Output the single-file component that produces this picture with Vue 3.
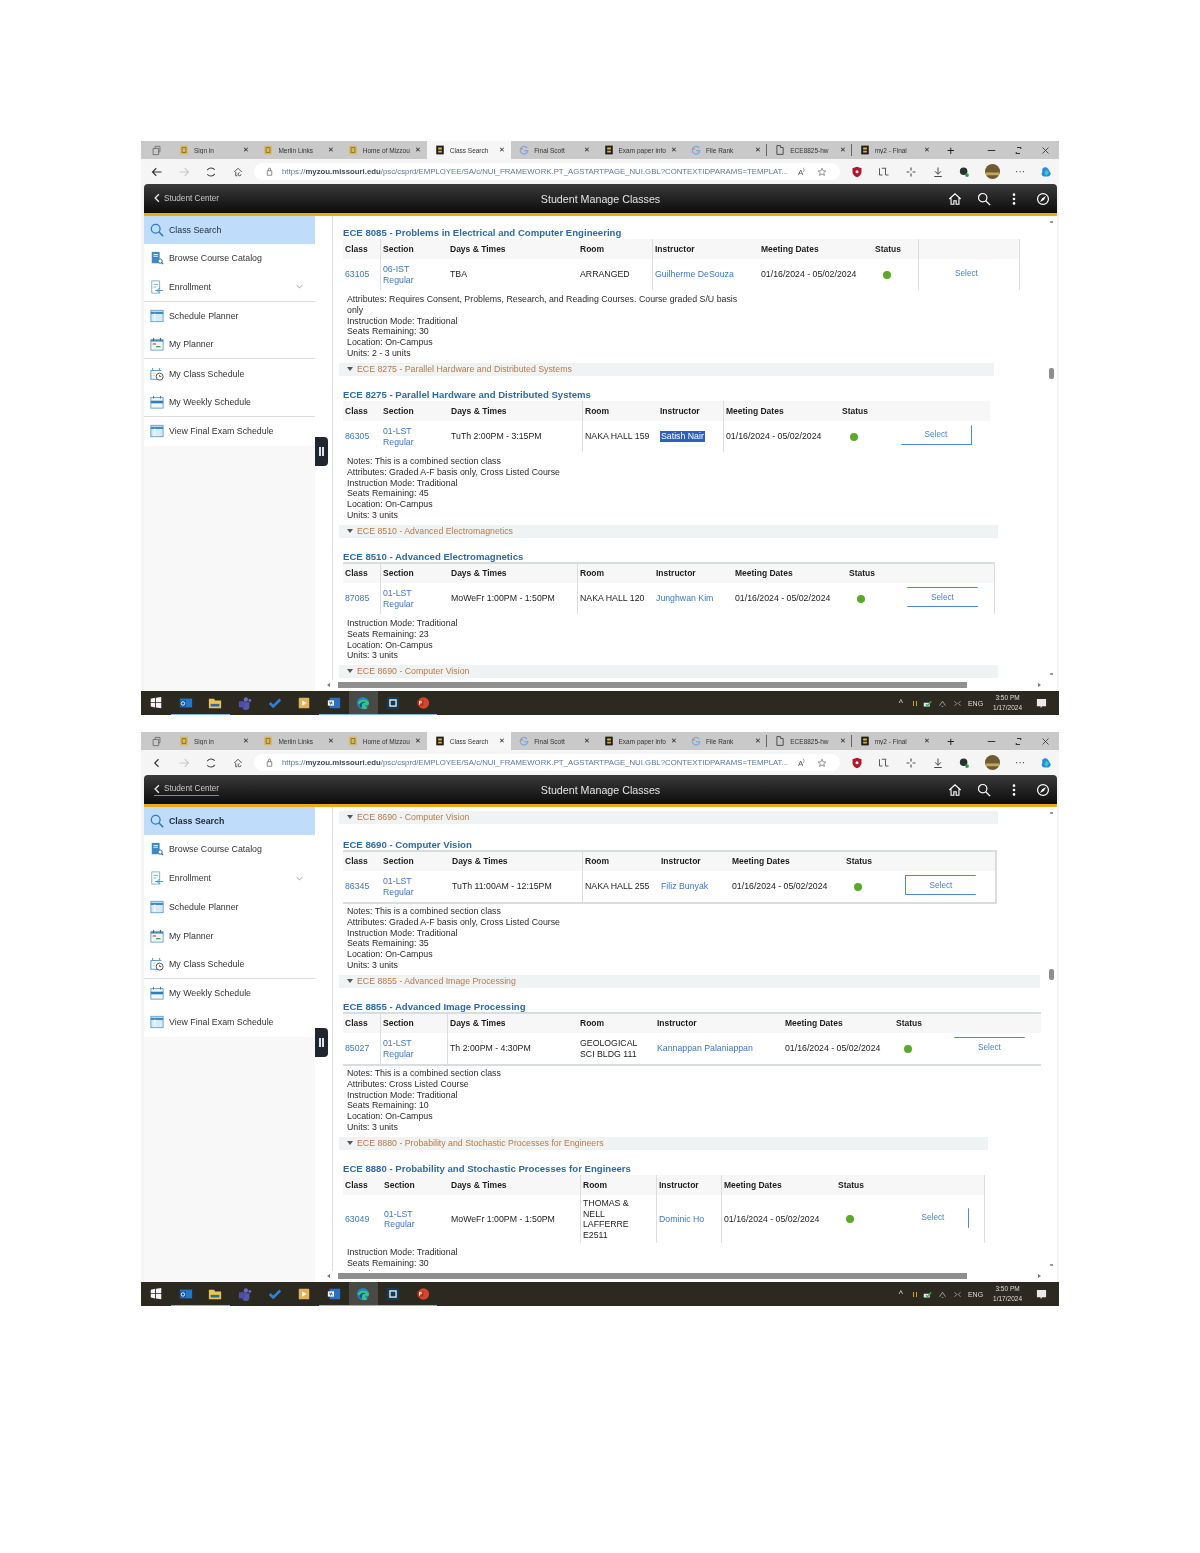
<template>
  <div class="page">
    <div v-for="s in screens" :key="s.id" class="screen">
      <!-- browser tabs -->
      <div class="tabs">
        <svg class="lead" viewBox="0 0 16 16" v-html="icons.spaces"></svg>
        <div v-for="t in tabs" :key="t.label" class="tab" :class="{ active: t.active, divided: t.divided }">
          <svg class="fav" viewBox="0 0 16 16" v-html="icons[t.icon]"></svg>
          <span class="tab-label">{{ t.label }}</span>
          <span class="tab-x">✕</span>
        </div>
        <span class="plus">+</span>
        <div class="win-btns">
          <svg viewBox="0 0 12 12"><path d="M1 6h10" stroke="#333" stroke-width="1.4" /></svg>
          <svg viewBox="0 0 12 12"><path d="M4 2h5v2M8 10H3V8" stroke="#333" stroke-width="1.4" fill="none" /></svg>
          <svg viewBox="0 0 12 12"><path d="M2 2l8 8M10 2l-8 8" stroke="#333" stroke-width="1.1" /></svg>
        </div>
      </div>

      <!-- address bar -->
      <div class="addr">
        <svg class="tool back" viewBox="0 0 16 16"><path :d="s.backIcon" stroke="#333" stroke-width="1.5" fill="none" /></svg>
        <svg class="tool fwd" viewBox="0 0 16 16"><path d="M2 8h12M9 3l5 5-5 5" stroke="#c9c9c9" stroke-width="1.5" fill="none" /></svg>
        <svg class="tool" viewBox="0 0 16 16"><path d="M3 5.5A6 6 0 0 1 13 5M13 10.5A6 6 0 0 1 3 11" stroke="#444" stroke-width="1.4" fill="none" /></svg>
        <svg class="tool" viewBox="0 0 16 16"><path d="M3 8l5-5 5 5M5 8v5h2M12 11a2 2 0 1 1-2-2" stroke="#444" stroke-width="1.2" fill="none" /></svg>
        <div class="pill">
          <svg class="lock" viewBox="0 0 12 12"><path d="M3 5h6v6H3zM4.500 5V3a1.500 1.500 0 0 1 3 0v2" stroke="#666" fill="none" /></svg>
          <span class="url">https://<b>myzou.missouri.edu</b>{{ urlPath }}</span>
          <span class="aloud">A⁾</span>
          <svg class="star" viewBox="0 0 16 16"><path d="M8 2l1.800 4 4.200.4-3.200 2.800 1 4.300L8 11.200l-3.800 2.300 1-4.300L2 6.400 6.200 6z" stroke="#555" fill="none" /></svg>
        </div>
        <div class="ext">
          <svg viewBox="0 0 16 16"><path d="M8 1l6 2v5c0 3-3 6-6 7-3-1-6-4-6-7V3z" fill="#b3162b" /><circle cx="8" cy="7.500" r="2" fill="#fff" /></svg>
          <svg viewBox="0 0 16 16"><path d="M2 3v9h4M10 3v9h4M5 3h6" stroke="#555" stroke-width="1.300" fill="none" /></svg>
          <svg viewBox="0 0 16 16"><path d="M8 2v4M8 10v4M2 8h4M10 8h4" stroke="#555" stroke-width="1.600" /></svg>
          <svg viewBox="0 0 16 16"><path d="M8 2v9M4 7l4 4 4-4M3 14h10" stroke="#444" stroke-width="1.300" fill="none" /></svg>
          <svg viewBox="0 0 16 16"><circle cx="7.500" cy="7" r="5" fill="#26332c" /><circle cx="12" cy="12" r="2.500" fill="#2c9a47" /></svg>
          <svg class="avatar" viewBox="0 0 16 16"><circle cx="8" cy="8" r="8" fill="#6f5a32" /><path d="M1 9h14v3H1z" fill="#c3a85c" /></svg>
          <span class="dots">···</span>
          <svg viewBox="0 0 16 16"><path d="M3 4c2-3 6-3 8 0l3 5c1 3-2 5-4 5H6c-3 0-5-3-3-6z" fill="#2a8be0" /><path d="M8 5l4 3-3 5-3-3z" fill="#34d0c0" /></svg>
        </div>
      </div>

      <!-- peoplesoft banner -->
      <header class="banner">
        <span class="crumb" :class="{ focused: s.focusCrumb }">
          <svg viewBox="0 0 8 12"><path d="M6.500 1l-5 5 5 5" stroke="#eee" stroke-width="1.700" fill="none" /></svg>
          <span>Student Center</span>
        </span>
        <span class="banner-title">Student Manage Classes</span>
        <div class="banner-icons">
          <svg viewBox="0 0 16 16"><path d="M1.500 8L8 2l6.500 6M3.500 7v7h3.200v-4h2.600v4h3.200V7" stroke="#fff" stroke-width="1.300" fill="none" /></svg>
          <svg viewBox="0 0 16 16"><circle cx="6.500" cy="6.500" r="4.800" stroke="#fff" stroke-width="1.400" fill="none" /><path d="M10 10l5 5" stroke="#fff" stroke-width="1.600" /></svg>
          <svg viewBox="0 0 16 16"><circle cx="8" cy="3" r="1.500" fill="#fff" /><circle cx="8" cy="8" r="1.500" fill="#fff" /><circle cx="8" cy="13" r="1.500" fill="#fff" /></svg>
          <svg viewBox="0 0 16 16"><circle cx="8" cy="8" r="6.200" stroke="#fff" stroke-width="1.400" fill="none" /><path d="M11.500 4.500L9 9 4.500 11.500 7 7z" fill="#fff" /></svg>
        </div>
      </header>

      <div class="main">
        <nav class="side">
          <div
            v-for="(item, i) in sideItems"
            :key="item.label"
            class="side-item"
            :class="{ current: i === 0, heavy: i === 0 && s.boldFirst, ruled: s.rules.includes(i) }"
          >
            <svg class="side-icon" viewBox="0 0 16 16" v-html="icons[item.icon]"></svg>
            <span>{{ item.label }}</span>
            <svg v-if="item.more" class="chev" viewBox="0 0 10 6"><path d="M1 1l4 4 4-4" stroke="#777" fill="none" /></svg>
          </div>
          <div class="side-fill"></div>
        </nav>
        <div class="gutter"></div>

        <div class="content">
          <div v-if="s.leadBar" class="bar lead" :style="{ width: s.leadBar.width + 'px' }">
            <i class="tri"></i>{{ s.leadBar.label }}
          </div>
          <section v-for="c in s.courses" :key="c.title">
            <h3 class="title">{{ c.title }}</h3>
            <div class="tbl" :class="c.edges" :style="{ width: sum(c.cols) + 'px' }">
              <div class="tr thead" :style="gridOf(c)">
                <span v-for="(h, i) in headings" :key="h" class="td" :class="{ sep: c.seps.includes(i) }">{{ h }}</span>
                <span class="td" :class="{ sep: c.seps.includes(7) }"></span>
              </div>
              <div class="tr tbody" :style="gridOf(c)">
                <span class="td" :class="{ sep: c.seps.includes(0) }"><a>{{ c.nbr }}</a></span>
                <span class="td" :class="{ sep: c.seps.includes(1) }"><a>{{ c.sec || "01-LST" }}</a><a>Regular</a></span>
                <span class="td" :class="{ sep: c.seps.includes(2) }">{{ c.days }}</span>
                <span class="td" :class="{ sep: c.seps.includes(3) }">
                  <span v-for="r in c.room" :key="r">{{ r }}</span>
                </span>
                <span class="td" :class="{ sep: c.seps.includes(4) }"><a :class="{ picked: c.picked }">{{ c.teacher }}</a></span>
                <span class="td" :class="{ sep: c.seps.includes(5) }">01/16/2024 - 05/02/2024</span>
                <span class="td" :class="{ sep: c.seps.includes(6) }"><i class="dot"></i></span>
                <span class="td" :class="{ sep: c.seps.includes(7) }">
                  <button class="select" :class="c.btn" :style="{ marginLeft: c.btnLeft + 'px' }">Select</button>
                </span>
              </div>
            </div>
            <div class="notes">
              <div v-for="n in c.notes" :key="n">{{ n }}</div>
            </div>
            <div v-if="c.bar" class="bar" :style="{ width: c.bar.width + 'px' }">
              <i class="tri"></i>{{ c.bar.label }}
            </div>
          </section>
        </div>

        <button class="handle"><i></i><i></i></button>
        <div class="vbar">
          <span class="arrow-up"></span>
          <span class="vthumb" :style="{ top: s.thumbTop + 'px' }"></span>
          <span class="arrow-down"></span>
        </div>
        <div class="hbar">
          <i class="h-left"></i>
          <span class="hthumb"></span>
          <i class="h-right"></i>
        </div>
      </div>

      <!-- windows taskbar -->
      <footer class="taskbar">
        <div v-for="a in apps" :key="a.icon" class="app" :class="{ running: a.running, on: a.on }">
          <svg viewBox="0 0 16 16" v-html="icons[a.icon]"></svg>
        </div>
        <div class="tray">
          <span class="caret">^</span>
          <i class="pause"></i>
          <svg viewBox="0 0 12 12"><path d="M1 5h8v5H1z" fill="#e8e8e8" /><path d="M4 7l2 2 5-6" stroke="#2fae4c" stroke-width="1.600" fill="none" /></svg>
          <svg viewBox="0 0 12 12"><path d="M2 9l4-6 4 6M5 10h2" stroke="#bbb" fill="none" /></svg>
          <svg viewBox="0 0 12 12"><path d="M2 9l3-3-3-3M10 3L7 6l3 3" stroke="#bbb" fill="none" /></svg>
          <span class="lang">ENG</span>
          <div class="clock"><span>{{ s.time }}</span><span>1/17/2024</span></div>
          <svg class="notif" viewBox="0 0 12 12"><path d="M1 1h10v8H7L5 11V9H1z" fill="#e9e9e9" /></svg>
        </div>
      </footer>
    </div>
  </div>
</template>

<script setup>
const urlPath = "/psc/csprd/EMPLOYEE/SA/c/NUI_FRAMEWORK.PT_AGSTARTPAGE_NUI.GBL?CONTEXTIDPARAMS=TEMPLAT...";

const headings = ["Class", "Section", "Days & Times", "Room", "Instructor", "Meeting Dates", "Status"];

const tabs = [
  { label: "Sign in", icon: "tiger" },
  { label: "Merlin Links", icon: "tiger" },
  { label: "Home of Mizzou", icon: "tiger" },
  { label: "Class Search", icon: "tigerDark", active: true },
  { label: "Final Scott", icon: "google" },
  { label: "Exam paper info", icon: "tigerDark" },
  { label: "File Rank", icon: "google", divided: true },
  { label: "ECE8825-hw", icon: "doc", divided: true },
  { label: "my2 - Final", icon: "tigerDark" },
];

const sideItems = [
  { label: "Class Search", icon: "search" },
  { label: "Browse Course Catalog", icon: "book" },
  { label: "Enrollment", icon: "enroll", more: true },
  { label: "Schedule Planner", icon: "window" },
  { label: "My Planner", icon: "planner" },
  { label: "My Class Schedule", icon: "clock" },
  { label: "My Weekly Schedule", icon: "week" },
  { label: "View Final Exam Schedule", icon: "window" },
];

const apps = [
  { icon: "windows" },
  { icon: "outlook", running: true },
  { icon: "folder", running: true },
  { icon: "teams" },
  { icon: "todo" },
  { icon: "player" },
  { icon: "word", running: true },
  { icon: "edge", running: true, on: true },
  { icon: "box", running: true },
  { icon: "ppt", running: true },
];

const icons = {
  spaces: '<path d="M3 5h8v9H3zM6 5V2h7v8h-2" stroke="#555" fill="none"/>',
  tiger: '<rect x="2" y="1" width="12" height="14" fill="#d8b75a"/><path d="M5 4h6v8H5z" fill="none" stroke="#6b5520"/>',
  tigerDark: '<rect x="2" y="1" width="12" height="14" fill="#1c1c1c"/><path d="M5 4h6v3H5zM5 9h6v3H5z" fill="#e2b33a"/>',
  google: '<path d="M13 5A6 6 0 1 0 14 9H8" stroke="#7fa9e0" stroke-width="2" fill="none"/><path d="M3 5l3 2" stroke="#e47a6d" stroke-width="2"/>',
  doc: '<path d="M3 1h6v3h4v11H3z" fill="none" stroke="#333" stroke-width="1.300"/>',
  search: '<circle cx="6.500" cy="6.500" r="5" stroke="#2f7dbd" stroke-width="1.500" fill="none"/><path d="M10 10l5 5" stroke="#2f7dbd" stroke-width="1.700"/>',
  book: '<path d="M2 1h9v13H2z" fill="#3d8ac4"/><path d="M4 4h5M4 6h5" stroke="#fff"/><circle cx="11.500" cy="11.500" r="2.500" fill="#fff" stroke="#265f8c"/><path d="M13 13l2 2" stroke="#265f8c" stroke-width="1.500"/>',
  enroll: '<path d="M2 1h9v14H2z" fill="#fff" stroke="#77a9cf"/><path d="M4 5h5M4 8h3" stroke="#5fb0a0"/><path d="M6 12h9M11 9l-3 3 3 3" stroke="#2f8ccb" fill="none"/>',
  window: '<rect x="1" y="1.500" width="14" height="13" fill="#d9e9f5" stroke="#5b9ccb"/><path d="M1 4.500h14" stroke="#3d8ac4" stroke-width="2.500"/><path d="M5.500 5v9" stroke="#fff"/>',
  planner: '<rect x="1" y="3" width="14" height="12" fill="#f3f8fb" stroke="#5b9ccb"/><path d="M1 4.500h14M4 1v3M12 1v3" stroke="#2f6f9f" stroke-width="1.300"/><path d="M3 8h4" stroke="#d4574a" stroke-width="1.500"/><path d="M7 11h5" stroke="#4ba35a" stroke-width="1.500"/>',
  clock: '<path d="M1 4h12M3 1v3M11 1v3M1 4v10h7" stroke="#5b9ccb" fill="none" stroke-width="1.200"/><path d="M3 7h3M3 10h3" stroke="#9cc3df"/><circle cx="11" cy="11" r="4" fill="#fff" stroke="#444"/><path d="M11 9v2h2" stroke="#444" fill="none"/>',
  week: '<rect x="1" y="3" width="14" height="12" fill="#f3f8fb" stroke="#5b9ccb"/><path d="M4 1v3M12 1v3" stroke="#2f6f9f"/><path d="M1 8h14" stroke="#2f7dbd" stroke-width="3"/>',
  windows: '<path d="M2 3l5-1v5H2zM8 2l6-1v6H8zM2 8h5v5l-5-1zM8 8h6v6l-6-1z" fill="#f4f4f4"/>',
  outlook: '<rect x="1" y="3" width="14" height="10" fill="#1f78c9"/><rect x="1" y="5" width="7" height="7" fill="#0d5aa0"/><circle cx="4.500" cy="8.500" r="2" fill="none" stroke="#fff"/>',
  folder: '<path d="M1 3h6l1 2h7v9H1z" fill="#eec34f"/><path d="M3 9h10v3H3z" fill="#2b6aa6"/>',
  teams: '<circle cx="9" cy="4" r="2.500" fill="#6a6bc4"/><circle cx="13.500" cy="5" r="1.700" fill="#6a6bc4"/><path d="M5 7h8v5a4 4 0 0 1-8 0z" fill="#5558af"/><rect x="1" y="6" width="7" height="7" fill="#4b4fa8"/>',
  todo: '<path d="M2 8l4 4 8-8" stroke="#2f7fd8" stroke-width="3" fill="none"/>',
  player: '<rect x="2" y="2" width="12" height="12" rx="1" fill="#e6b15b"/><path d="M6 5l5 3-5 3z" fill="#fff"/>',
  word: '<rect x="3" y="2" width="12" height="12" fill="#2a6fc4"/><rect x="1" y="5" width="7" height="6" fill="#fff"/><path d="M3 6.500l1 3 1-3 1 3" stroke="#1b4f96" fill="none"/>',
  edge: '<circle cx="8" cy="8" r="7" fill="#2280c8"/><path d="M2 8c1-5 11-6 13 0 0 3-4 3-5 1 1 4 4 5 3 5-5 3-9-1-8-4z" fill="#33c481"/><path d="M4 10c2-4 6-4 7-2-3-1-5 1-4 5-2 0-3-1-3-3z" fill="#15548f"/>',
  box: '<rect x="1" y="1" width="14" height="14" fill="#123c54"/><rect x="4.500" y="4.500" width="7" height="7" fill="none" stroke="#f2f2f2" stroke-width="1.500"/>',
  ppt: '<circle cx="8.500" cy="8" r="6.500" fill="#d4472b"/><rect x="1.500" y="5" width="7" height="6" fill="#b92f15"/><path d="M4 10V6h2v2H4" stroke="#fff" fill="none"/>',
};

const screens = [
  {
    id: 1,
    backIcon: "M14 8H2M7 3L2 8l5 5",
    focusCrumb: false,
    boldFirst: false,
    rules: [2, 4, 6],
    thumbTop: 152,
    time: "3:50 PM",
    courses: [
      {
        title: "ECE 8085 - Problems in Electrical and Computer Engineering",
        cols: [38, 67, 130, 75, 106, 114, 46, 101],
        seps: [0, 3, 6, 7],
        edges: "",
        nbr: "63105",
        sec: "06-IST",
        days: "TBA",
        room: ["ARRANGED"],
        teacher: "Guilherme DeSouza",
        btn: "",
        btnLeft: 10,
        notes: [
          "Attributes: Requires Consent, Problems, Research, and Reading Courses. Course graded S/U basis",
          "only",
          "Instruction Mode: Traditional",
          "Seats Remaining: 30",
          "Location: On-Campus",
          "Units: 2 - 3 units",
        ],
        bar: { label: "ECE 8275 - Parallel Hardware and Distributed Systems", width: 655 },
      },
      {
        title: "ECE 8275 - Parallel Hardware and Distributed Systems",
        cols: [38, 68, 134, 75, 66, 116, 50, 100],
        seps: [2, 4],
        edges: "",
        nbr: "86305",
        days: "TuTh 2:00PM - 3:15PM",
        room: ["NAKA HALL 159"],
        teacher: "Satish Nair",
        picked: true,
        btn: "b r",
        btnLeft: 9,
        notes: [
          "Notes: This is a combined section class",
          "Attributes: Graded A-F basis only, Cross Listed Course",
          "Instruction Mode: Traditional",
          "Seats Remaining: 45",
          "Location: On-Campus",
          "Units: 3 units",
        ],
        bar: { label: "ECE 8510 - Advanced Electromagnetics", width: 659 },
      },
      {
        title: "ECE 8510 - Advanced Electromagnetics",
        cols: [38, 68, 129, 76, 79, 114, 50, 98],
        seps: [0, 2, 7],
        edges: "t",
        nbr: "87085",
        days: "MoWeFr 1:00PM - 1:50PM",
        room: ["NAKA HALL 120"],
        teacher: "Junghwan Kim",
        btn: "t b",
        btnLeft: 8,
        notes: [
          "Instruction Mode: Traditional",
          "Seats Remaining: 23",
          "Location: On-Campus",
          "Units: 3 units",
        ],
        bar: { label: "ECE 8690 - Computer Vision", width: 659 },
      },
    ],
  },
  {
    id: 2,
    backIcon: "M10 3L5 8l5 5",
    focusCrumb: true,
    boldFirst: true,
    rules: [5],
    thumbTop: 162,
    time: "3:50 PM",
    leadBar: { label: "ECE 8690 - Computer Vision", width: 659 },
    courses: [
      {
        title: "ECE 8690 - Computer Vision",
        cols: [38, 69, 133, 76, 71, 114, 51, 100],
        seps: [2],
        edges: "t r b",
        nbr: "86345",
        days: "TuTh 11:00AM - 12:15PM",
        room: ["NAKA HALL 255"],
        teacher: "Filiz Bunyak",
        btn: "l t b",
        btnLeft: 8,
        notes: [
          "Notes: This is a combined section class",
          "Attributes: Graded A-F basis only, Cross Listed Course",
          "Instruction Mode: Traditional",
          "Seats Remaining: 35",
          "Location: On-Campus",
          "Units: 3 units",
        ],
        bar: { label: "ECE 8855 - Advanced Image Processing", width: 701 },
      },
      {
        title: "ECE 8855 - Advanced Image Processing",
        cols: [38, 67, 130, 77, 128, 111, 50, 97],
        seps: [0, 1],
        edges: "t b",
        nbr: "85027",
        days: "Th 2:00PM - 4:30PM",
        room: ["GEOLOGICAL", "SCI BLDG 111"],
        teacher: "Kannappan Palaniappan",
        btn: "t",
        btnLeft: 8,
        notes: [
          "Notes: This is a combined section class",
          "Attributes: Cross Listed Course",
          "Instruction Mode: Traditional",
          "Seats Remaining: 10",
          "Location: On-Campus",
          "Units: 3 units",
        ],
        bar: { label: "ECE 8880 - Probability and Stochastic Processes for Engineers", width: 649 },
      },
      {
        title: "ECE 8880 - Probability and Stochastic Processes for Engineers",
        cols: [39, 67, 132, 76, 65, 114, 51, 98],
        seps: [2, 3, 4, 7],
        edges: "",
        nbr: "63049",
        days: "MoWeFr 1:00PM - 1:50PM",
        room: ["THOMAS &", "NELL", "LAFFERRE", "E2511"],
        teacher: "Dominic Ho",
        btn: "r",
        btnLeft: 9,
        notes: ["Instruction Mode: Traditional", "Seats Remaining: 30", "Location: On-Campus"],
      },
    ],
  },
];

const sum = (list) => list.reduce((a, b) => a + b, 0);
const gridOf = (course) => ({
  gridTemplateColumns: course.cols.map((w) => w + "px").join(" "),
});
</script>

<style scoped>
.page {
  width: 1200px;
  height: 1553px;
  padding: 141px 141px 0;
  box-sizing: border-box;
  background: #fff;
  font-family: "Liberation Sans", Arial, sans-serif;
  display: flex;
  flex-direction: column;
  gap: 17px;
}

.screen {
  width: 918px;
  height: 574px;
  display: flex;
  flex-direction: column;
  background: #f4f4f4;
  filter: blur(0.6px);
  overflow: hidden;
}

/* tabs */
.tabs {
  height: 18px;
  flex: none;
  background: #c9c9c9;
  display: flex;
  align-items: center;
  color: #333;
}
.lead {
  width: 11px;
  height: 11px;
  margin: 0 9px 0 10px;
  flex: none;
}
.tab {
  flex: 0 0 84.400px;
  height: 18px;
  box-sizing: border-box;
  display: flex;
  align-items: center;
  padding: 0 6px 0 8px;
  gap: 5px;
  font-size: 6.500px;
  position: relative;
}
.tab.active {
  background: #f6f6f6;
}
.tab.divided::after {
  content: "";
  position: absolute;
  right: 0;
  top: 3px;
  bottom: 3px;
  width: 1px;
  background: #666;
}
.fav {
  width: 10px;
  height: 10px;
  flex: none;
}
.tab-label {
  flex: 1;
  white-space: nowrap;
  overflow: hidden;
}
.tab-x {
  font-size: 7px;
  color: #222;
}
.plus {
  font-size: 13px;
  margin-left: 11px;
  color: #222;
}
.win-btns {
  margin-left: auto;
  display: flex;
  gap: 18px;
  padding-right: 9px;
}
.win-btns svg {
  width: 9px;
  height: 9px;
}

/* address bar */
.addr {
  height: 25px;
  flex: none;
  background: #f5f5f5;
  display: flex;
  align-items: center;
  padding-left: 10px;
}
.tool {
  width: 12px;
  height: 12px;
  flex: none;
  margin-right: 15px;
}
.tool:nth-of-type(4) {
  margin-right: 10px;
}
.pill {
  width: 586px;
  height: 17px;
  background: #fff;
  border-radius: 9px;
  display: flex;
  align-items: center;
  flex: none;
  color: #555;
}
.lock {
  width: 9px;
  height: 9px;
  margin: 0 8px 0 11px;
  flex: none;
}
.url {
  flex: 0 0 505px;
  white-space: nowrap;
  font-size: 7.800px;
  color: #5a779c;
}
.url b {
  font-weight: bold;
  color: #3c4a5c;
}
.aloud {
  font-size: 8px;
  margin-left: 10px;
}
.star {
  width: 10px;
  height: 10px;
  margin-left: 12px;
}
.ext {
  flex: 1;
  display: flex;
  align-items: center;
  justify-content: space-between;
  padding: 0 7px 0 11px;
}
.ext svg {
  width: 12px;
  height: 12px;
}
.ext .avatar {
  width: 15px;
  height: 15px;
}
.ext .dots {
  font-size: 10px;
  color: #444;
}

/* banner */
.banner {
  height: 32px;
  flex: none;
  margin: 0 2px 0 3px;
  box-sizing: border-box;
  border-bottom: 3px solid #f0a818;
  border-radius: 4px 4px 0 0;
  background: linear-gradient(#3a3a3a, #0c0c0c);
  display: flex;
  align-items: center;
  position: relative;
  color: #eee;
}
.crumb {
  display: flex;
  align-items: center;
  gap: 4px;
  margin-left: 10px;
  font-size: 8.200px;
  color: #c9c9c9;
  padding-bottom: 1px;
}
.crumb.focused {
  border-bottom: 1px solid #7f8a94;
}
.crumb svg {
  width: 6px;
  height: 10px;
}
.banner-title {
  position: absolute;
  left: 0;
  right: 0;
  text-align: center;
  font-size: 10.700px;
  color: #e4e4e4;
}
.banner-icons {
  margin-left: auto;
  display: flex;
  gap: 15.300px;
  padding-right: 7px;
}
.banner-icons svg {
  width: 14px;
  height: 14px;
}

/* main */
.main {
  height: 475px;
  flex: none;
  margin: 0 2px 0 3px;
  background: #fff;
  display: flex;
  position: relative;
  overflow: hidden;
}
.side {
  width: 171px;
  flex: none;
  display: flex;
  flex-direction: column;
}
.side-item {
  height: 28.800px;
  flex: none;
  box-sizing: border-box;
  display: flex;
  align-items: center;
  gap: 5px;
  padding-left: 6px;
  font-size: 8.800px;
  color: #333;
  background: #fff;
}
.side-item.current {
  height: 28px;
  padding-bottom: 1px;
  background: #bfdcfa;
  color: #1d2a38;
}
.side-item.heavy {
  font-weight: bold;
}
.side-item.ruled {
  border-bottom: 1px solid #dcdcdc;
}
.side-icon {
  width: 14px;
  height: 14px;
  flex: none;
}
.chev {
  width: 7px;
  height: 5px;
  margin-left: auto;
  margin-right: 12px;
}
.side-fill {
  flex: 1;
  background: #f8f8f8;
}
.gutter {
  width: 17px;
  flex: none;
  border-right: 1px solid #dfe2e2;
}
.handle {
  position: absolute;
  left: 171px;
  top: 221px;
  width: 13px;
  height: 29px;
  padding: 0;
  border: 0;
  border-radius: 0 4px 4px 0;
  background: #20262e;
  display: flex;
  justify-content: center;
  align-items: center;
  gap: 1px;
}
.handle i {
  width: 2px;
  height: 9px;
  background: #dfe3e8;
}

.content {
  flex: 1;
  min-width: 0;
  padding: 11px 0 0 6px;
  font-size: 8.750px;
  color: #222;
}
.title {
  margin: 0 0 0 4px;
  font-size: 9.600px;
  line-height: 12px;
  font-weight: bold;
  color: #2e6aa8;
  white-space: nowrap;
}
.tbl {
  margin-left: 4px;
  box-sizing: content-box;
}
.tbl.t {
  border-top: 2px solid #dadddf;
  margin-top: -1px;
}
.tbl.t .thead {
  height: 19px;
}
.tbl.b {
  border-bottom: 2px solid #dadddf;
}
.tbl.b + .notes {
  margin-top: 2px;
}
.tbl.r {
  border-right: 2px solid #dadddf;
}
.tr {
  display: grid;
}
.thead {
  height: 20px;
  background: #f7f7f7;
  font-weight: bold;
  font-size: 8.500px;
  color: #1c1c1c;
}
.tbody {
  min-height: 31px;
}
.tbody .td {
  padding-top: 3px;
  padding-bottom: 3px;
}
.td {
  display: flex;
  flex-direction: column;
  justify-content: center;
  align-items: flex-start;
  padding-left: 2px;
  line-height: 10.500px;
  white-space: nowrap;
  box-sizing: border-box;
}
.td.sep {
  border-right: 1.500px solid #d9dee3;
}
.td a {
  color: #3a78c8;
}
.td a.picked {
  color: #fff;
  background: #2f5fc4;
  padding: 0 1px;
}
.dot {
  width: 8px;
  height: 8px;
  border-radius: 50%;
  background: #59aa2a;
  margin-left: 8px;
}
.select {
  width: 71px;
  height: 20px;
  padding: 0;
  background: #fff;
  border: 0 solid #4d8ad2;
  border-radius: 1px;
  color: #4a7fc5;
  font: 8.200px "Liberation Sans", Arial, sans-serif;
  margin-top: -3px;
}
.select.t {
  border-top-width: 1.500px;
}
.select.b {
  border-bottom-width: 1.500px;
}
.select.l {
  border-left-width: 1.500px;
}
.select.r {
  border-right-width: 1.500px;
}
.notes {
  margin: 4px 0 0 8px;
  font-size: 8.800px;
  line-height: 10.750px;
  color: #2b2b2b;
  white-space: nowrap;
}
.bar {
  height: 13px;
  margin: 4px 0 13.500px;
  padding-left: 8px;
  box-sizing: border-box;
  background: #f0f3f3;
  font-size: 8.770px;
  line-height: 13px;
  color: #b87a48;
  white-space: nowrap;
}
.bar.lead {
  margin-top: -7px;
  margin-bottom: 15px;
}
.tri {
  display: inline-block;
  width: 0;
  height: 0;
  margin-right: 4px;
  vertical-align: 1px;
  border: 3px solid transparent;
  border-top: 4px solid #555;
  border-bottom: 0;
}

/* scrollbars */
.vbar {
  position: absolute;
  right: 1px;
  top: 0;
  bottom: 0;
  width: 9px;
}
.vthumb {
  position: absolute;
  left: 2px;
  width: 5px;
  height: 11px;
  border-radius: 2px;
  background: #8e8e8e;
}
.arrow-up,
.arrow-down {
  position: absolute;
  left: 3px;
  width: 3px;
  height: 2px;
  background: #999;
}
.arrow-up {
  top: 5px;
}
.arrow-down {
  bottom: 16px;
}
.hbar {
  position: absolute;
  left: 186px;
  right: 0;
  bottom: 0;
  height: 11px;
  background: #fff;
}
.hthumb {
  position: absolute;
  left: 8px;
  width: 629px;
  top: 2px;
  height: 6px;
  background: #8f8f8f;
}
.h-left,
.h-right {
  position: absolute;
  top: 3px;
  border: 2.500px solid transparent;
  width: 0;
  height: 0;
}
.h-left {
  left: -3px;
  border-right: 3px solid #777;
  border-left: 0;
}
.h-right {
  left: 708px;
  border-left: 3px solid #777;
  border-right: 0;
}

/* taskbar */
.taskbar {
  height: 24px;
  flex: none;
  background: #2c2a20;
  display: flex;
  align-items: center;
}
.app {
  width: 29.600px;
  height: 24px;
  box-sizing: border-box;
  flex: none;
  display: flex;
  align-items: center;
  justify-content: center;
  border-bottom: 1px solid transparent;
}
.app:first-child {
  margin-left: 0.500px;
}
.app.running {
  border-bottom-color: #79b8ee;
}
.app.on {
  background: #4a4a44;
}
.app svg {
  width: 14px;
  height: 14px;
}
.tray {
  margin-left: auto;
  display: flex;
  align-items: center;
  gap: 6px;
  padding-right: 12px;
  color: #ddd;
  font-size: 7px;
}
.tray svg {
  width: 9px;
  height: 9px;
}
.caret {
  font-size: 9px;
  margin-right: 4px;
}
.pause {
  width: 4px;
  height: 5px;
  border-left: 1.500px solid #d8a80a;
  border-right: 1.500px solid #d8a80a;
  box-sizing: border-box;
}
.clock {
  display: flex;
  flex-direction: column;
  align-items: center;
  font-size: 6.500px;
  line-height: 10px;
  margin: 0 4px;
}
.tray .notif {
  width: 11px;
  height: 11px;
  margin-left: 4px;
}
</style>

<style>
body {
  margin: 0;
  background: #fff;
}
</style>
